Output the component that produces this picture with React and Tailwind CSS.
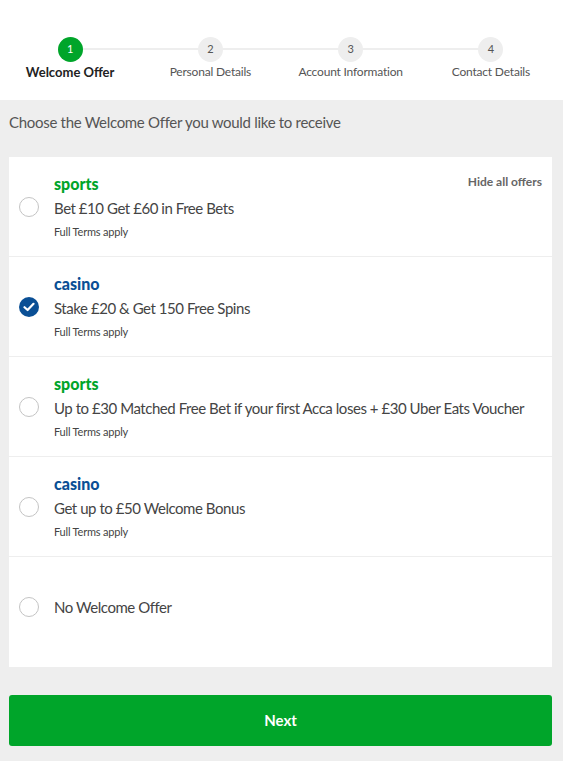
import React from "react";

const steps = [
  { n: 1, label: "Welcome Offer", active: true },
  { n: 2, label: "Personal Details" },
  { n: 3, label: "Account Information" },
  { n: 4, label: "Contact Details" },
];

const offers = [
  { cat: "sports", text: "Bet £10 Get £60 in Free Bets", checked: false },
  { cat: "casino", text: "Stake £20 & Get 150 Free Spins", checked: true },
  {
    cat: "sports",
    text: "Up to £30 Matched Free Bet if your first Acca loses + £30 Uber Eats Voucher",
    checked: false,
  },
  { cat: "casino", text: "Get up to £50 Welcome Bonus", checked: false },
];

function Radio({ checked }) {
  if (checked) {
    return (
      <div className="w-[20px] h-[20px] rounded-full bg-[#0a4f95] flex items-center justify-center shrink-0">
        <svg width="12" height="10" viewBox="0 0 12 10">
          <path d="M1.5 5.2 L4.6 8 L10.5 1.8" fill="none" stroke="white" strokeWidth="2.2" strokeLinecap="round" strokeLinejoin="round" />
        </svg>
      </div>
    );
  }
  return <div className="w-[20px] h-[20px] rounded-full border border-[#c4c4c4] bg-white shrink-0" />;
}

export default function App() {
  return (
    <div className="w-[563px] h-[761px] bg-[#eeeeee] font-['Lato','Open_Sans',sans-serif] text-[#444]">
      <div className="bg-white h-[100px] pt-[37px] relative">
        <div className="absolute left-[69px] right-[72px] top-[48px] h-[2px] bg-[#eeeeee]" />
        <div className="relative grid grid-cols-4 w-[561px]">
          {steps.map((s) => (
            <div key={s.n} className="flex flex-col items-center">
              <div
                className={
                  "w-[25px] h-[25px] rounded-full flex items-center justify-center text-[11px] " +
                  (s.active ? "bg-[#00a52a] text-white" : "bg-[#eeeeee] text-[#555]")
                }
              >
                {s.n}
              </div>
              <div
                className={
                  "mt-[2px] leading-[16px] " +
                  (s.active ? "text-[13px] font-bold text-[#222]" : "text-[12px] tracking-[-0.2px] text-[#555]")
                }
              >
                {s.label}
              </div>
            </div>
          ))}
        </div>
      </div>
      <div className="pl-[9px] pr-[11px]">
        <div className="pt-[13px] pb-[25px] text-[15px] leading-[19px] text-[#555] tracking-[-0.3px]">
          Choose the Welcome Offer you would like to receive
        </div>
        <div className="bg-white">
          {offers.map((o, i) => (
            <div key={i} className="relative h-[100px] border-b border-[#eeeeee] flex items-center pl-[10px]">
              <Radio checked={o.checked} />
              <div className="ml-[15px] flex flex-col">
                <div
                  className={
                    "text-[16px] leading-[18px] font-black " +
                    (o.cat === "sports" ? "text-[#00a52a]" : "text-[#0a4f95]")
                  }
                >
                  {o.cat}
                </div>
                <div className="mt-[6px] text-[15px] leading-[18px] text-[#444] whitespace-nowrap tracking-[-0.45px]">
                  {o.text}
                </div>
                <div className="mt-[8px] text-[11px] leading-[14px] text-[#444] tracking-[-0.2px]">Full Terms apply</div>
              </div>
              {i === 0 && (
                <div className="absolute right-[10px] top-[16px] text-[12px] font-bold text-[#666]">
                  Hide all offers
                </div>
              )}
            </div>
          ))}
          <div className="h-[110px] flex items-center pl-[10px] pb-[10px]">
            <Radio checked={false} />
            <div className="ml-[15px] text-[15px] leading-[18px] text-[#444] tracking-[-0.45px]">No Welcome Offer</div>
          </div>
        </div>
        <button className="mt-[28px] w-full h-[51px] rounded-[3px] bg-[#00a52a] text-white font-bold text-[15px]">
          Next
        </button>
      </div>
    </div>
  );
}
